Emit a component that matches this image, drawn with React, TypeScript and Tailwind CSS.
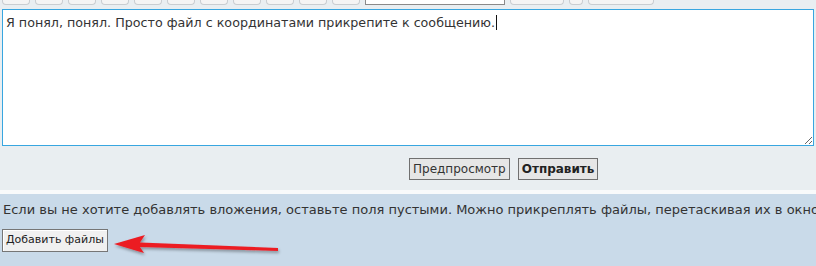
const font = { fontFamily: '"DejaVu Sans", Verdana, sans-serif' };

function ToolbarStub({ w, dark }: { w: string; dark?: boolean }) {
  return (
    <div
      className={[
        "h-[6px] -mt-px border border-t-0",
        w,
        dark ? "border-[#8a8a8a] bg-white" : "rounded-b-[4px] border-[#c9cdd1] bg-[#f4f4f4]",
      ].join(" ")}
    />
  );
}

function Arrow() {
  return (
    <svg width="172" height="30" viewBox="0 0 172 30" className="ml-[5px] mt-[4px]">
      <defs>
        <filter id="sh" x="-10%" y="-50%" width="120%" height="200%">
          <feDropShadow dx="1" dy="2" stdDeviation="1.5" floodColor="#000" floodOpacity="0.35" />
        </filter>
      </defs>
      <g filter="url(#sh)" fill="#ec1c24">
        <path d="M1 11 L32 2 L27 9.5 L165 15 L165 18 L27 14 L31 20 Z" />
      </g>
    </svg>
  );
}

export default function App() {
  const stubs = Array.from({ length: 11 });
  return (
    <div className="w-[816px] h-[266px] overflow-hidden bg-[#c9dae9] text-[#333]" style={font}>
      <div className="bg-[#e9eef1] pb-[2px]">
        <div className="flex items-start h-[8px] pl-[2px]">
          <div className="flex gap-[5px]">
            {stubs.map((_, i) => (
              <ToolbarStub key={i} w="w-[28px]" />
            ))}
          </div>
          <div className="ml-[5px] flex gap-[5px]">
            <ToolbarStub w="w-[140px]" dark />
            <ToolbarStub w="w-[54px]" />
            <ToolbarStub w="w-[14px]" />
            <ToolbarStub w="w-[66px]" />
          </div>
        </div>
        <div className="px-[2px] pt-px">
          <div className="relative">
            <textarea
              className="block w-[812px] h-[137px] border border-[#38a6e0] bg-white px-[3px] pt-[5px] text-[12.7px] leading-[16px] text-[#333] outline-none resize"
              style={font}
              defaultValue="Я понял, понял. Просто файл с координатами прикрепите к сообщению."
            />
            {/* caret shown in the screenshot */}
            <span className="pointer-events-none absolute left-[494px] top-[6px] h-[15px] w-px bg-[#111]" />
          </div>
        </div>
        <div className="flex gap-[8px] pl-[409px] pt-[12px] h-[42px]">
          <button
            className="h-[22px] px-[3px] border border-[#707070] bg-[#e6e6e6] text-[12px] text-[#333]"
            style={font}
          >
            Предпросмотр
          </button>
          <button
            className="h-[22px] px-[3px] border border-[#707070] bg-[#e6e6e6] text-[12px] font-bold text-[#222]"
            style={font}
          >
            Отправить
          </button>
        </div>
      </div>
      <div className="h-[4px] bg-[#f8fafb]" />
      <div className="pl-[3px] pt-[8px]">
        <p className="text-[13px] leading-[16px] whitespace-nowrap text-[#333]">
          Если вы не хотите добавлять вложения, оставьте поля пустыми. Можно прикреплять файлы, перетаскивая их в окно
        </p>
        <div className="mt-[11px] flex items-start">
          <button
            className="-ml-px h-[23px] px-[3px] border border-[#767676] bg-[#f0f0f0] text-[11px] text-[#222] shadow-[inset_1px_1px_0_#fff]"
            style={font}
          >
            Добавить файлы
          </button>
          <Arrow />
        </div>
      </div>
    </div>
  );
}
